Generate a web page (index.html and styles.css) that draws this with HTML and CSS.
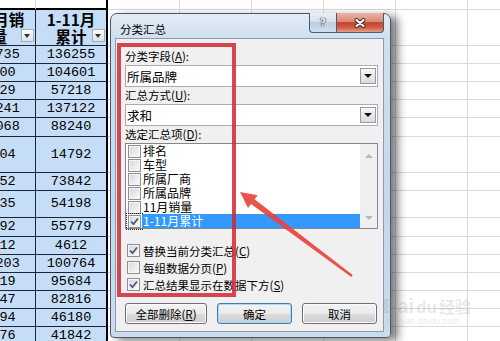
FILE: index.html
```html
<!DOCTYPE html>
<html>
	<head>
		<meta charset="UTF-8">
		<title>分类汇总</title>
		<link rel="stylesheet" href="styles.css">
	</head>
	<body>
		<div class="screen">
			<table class="sheet">
				<colgroup><col><col><col><col><col><col><col><col></colgroup>
				<tr class="r10"><td class="t"></td><td class="t e"></td><td></td><td></td><td></td><td></td><td></td><td></td></tr>
				<tr class="r36"><td class="b hd">11月销<br>量<span class="filter"></span></td><td class="b e hd">1-11月<br>累计<span class="filter"></span></td><td></td><td></td><td></td><td></td><td></td><td></td></tr>
				<tr class="r18"><td class="b">12735</td><td class="b e">136255</td><td></td><td></td><td></td><td></td><td></td><td></td></tr>
				<tr class="r18"><td class="b">9800</td><td class="b e">104601</td><td></td><td></td><td></td><td></td><td></td><td></td></tr>
				<tr class="r18"><td class="b">5129</td><td class="b e">57218</td><td></td><td></td><td></td><td></td><td></td><td></td></tr>
				<tr class="r18"><td class="b">13241</td><td class="b e">137122</td><td></td><td></td><td></td><td></td><td></td><td></td></tr>
				<tr class="r19"><td class="b">10068</td><td class="b e">88240</td><td></td><td></td><td></td><td></td><td></td><td></td></tr>
				<tr class="r36"><td class="b">1504</td><td class="b e">14792</td><td></td><td></td><td></td><td></td><td></td><td></td></tr>
				<tr class="r18"><td class="b">8052</td><td class="b e">73842</td><td></td><td></td><td></td><td></td><td></td><td></td></tr>
				<tr class="r27"><td class="b">6035</td><td class="b e">54198</td><td></td><td></td><td></td><td></td><td></td><td></td></tr>
				<tr class="r19"><td class="b">5592</td><td class="b e">55779</td><td></td><td></td><td></td><td></td><td></td><td></td></tr>
				<tr class="r18"><td class="b">1012</td><td class="b e">4612</td><td></td><td></td><td></td><td></td><td></td><td></td></tr>
				<tr class="r18"><td class="b">10203</td><td class="b e">100764</td><td></td><td></td><td></td><td></td><td></td><td></td></tr>
				<tr class="r18"><td class="b">9619</td><td class="b e">95684</td><td></td><td></td><td></td><td></td><td></td><td></td></tr>
				<tr class="r18"><td class="b">8347</td><td class="b e">82816</td><td></td><td></td><td></td><td></td><td></td><td></td></tr>
				<tr class="r18"><td class="b">4694</td><td class="b e">46180</td><td></td><td></td><td></td><td></td><td></td><td></td></tr>
				<tr class="r18"><td class="b">4176</td><td class="b e">41842</td><td></td><td></td><td></td><td></td><td></td><td></td></tr>
			</table>

			<div class="dialog">
				<div class="titlebar">
					<span class="title">分类汇总</span>
					<div class="caption">
						<span class="cap help">?</span>
						<span class="cap close">
							<svg width="14" height="10" viewBox="0 0 14 10">
								<path d="M3.5 2l7 6M10.5 2l-7 6" stroke="#3a2522" stroke-width="4" stroke-linecap="round"/>
								<path d="M3.5 2l7 6M10.5 2l-7 6" stroke="#fff" stroke-width="2.2" stroke-linecap="round"/>
							</svg>
						</span>
					</div>
				</div>
				<div class="panel">
					<div class="label">分类字段(<u>A</u>):</div>
					<div class="combo"><span>所属品牌</span><i class="drop"></i></div>
					<div class="label">汇总方式(<u>U</u>):</div>
					<div class="combo"><span>求和</span><i class="drop"></i></div>
					<div class="label">选定汇总项(<u>D</u>):</div>
					<div class="listbox">
						<ul class="items">
							<li><span class="cb"></span><span class="txt">排名</span></li>
							<li><span class="cb"></span><span class="txt">车型</span></li>
							<li><span class="cb"></span><span class="txt">所属厂商</span></li>
							<li><span class="cb"></span><span class="txt">所属品牌</span></li>
							<li><span class="cb"></span><span class="txt">11月销量</span></li>
							<li class="sel"><span class="cb focus"><svg width="11" height="11" viewBox="0 0 11 11"><path d="M2 5.5l2.5 2.6L9 2.5" fill="none" stroke="#4a5c7e" stroke-width="1.8"/></svg></span><span class="txt">1-11月累计</span></li>
						</ul>
						<div class="vscroll"><i class="up"></i><i class="down"></i></div>
					</div>
					<div class="opts">
						<div class="opt"><span class="cb"><svg width="11" height="11" viewBox="0 0 11 11"><path d="M2 5.5l2.5 2.6L9 2.5" fill="none" stroke="#4a5c7e" stroke-width="1.8"/></svg></span>替换当前分类汇总(<u>C</u>)</div>
						<div class="opt"><span class="cb"></span>每组数据分页(<u>P</u>)</div>
						<div class="opt"><span class="cb"><svg width="11" height="11" viewBox="0 0 11 11"><path d="M2 5.5l2.5 2.6L9 2.5" fill="none" stroke="#4a5c7e" stroke-width="1.8"/></svg></span>汇总结果显示在数据下方(<u>S</u>)</div>
					</div>
					<div class="btns">
						<button class="btn wide">全部删除(<u>R</u>)</button>
						<button class="btn def">确定</button>
						<button class="btn">取消</button>
					</div>
				</div>
			</div>

			<div class="redbox"></div>

			<svg class="arrow" width="500" height="341" viewBox="0 0 500 341">
				<polygon points="240,192 257.6,195.2 254.6,199.2 352.7,275 351.3,277 251,204 248,208" fill="#e8463c"/>
			</svg>

			<div class="mark">
				<span class="bai">Bai</span><span class="du">du</span><span class="jy">经验</span>
				<div class="url">jingyan.baidu.com</div>
			</div>
		</div>
	</body>
</html>
```

FILE: styles.css
```css
html{
	margin: 0;
	padding: 0;
}
body{
	margin: 0;
	padding: 0;
	width: 500px;
	height: 341px;
	overflow: hidden;
	background: #fff;
	font-family: "Noto Sans CJK SC", sans-serif;
}
.screen{
	position: relative;
	width: 500px;
	height: 341px;
	overflow: hidden;
}

/* spreadsheet */
.sheet{
	border-collapse: separate;
	border-spacing: 0;
	table-layout: fixed;
	width: 576px;
	margin-left: -36px;
	font-family: "Liberation Mono", monospace;
	font-size: 13.5px;
	color: #000;
}
.sheet col{
	width: 72px;
}
.sheet td{
	padding: 0;
	border-right: 1px solid #d9d9d9;
	border-bottom: 1px solid #d9d9d9;
	text-align: center;
	line-height: 14px;
	position: relative;
}
.sheet td.b{
	background: #c5ddf7;
	border-right-color: #1d2638;
	border-bottom-color: #1d2638;
}
.sheet td.e{
	border-right: 2px solid #000;
}
.sheet td.t{
	border-bottom: 2px solid #000;
}
.sheet td.hd{
	font-family: "Noto Sans CJK SC", sans-serif;
	font-weight: bold;
	font-size: 15.5px;
	line-height: 17px;
}
.r10{ height: 10px; }
.r18{ height: 18px; }
.r19{ height: 19px; }
.r27{ height: 27px; }
.r36{ height: 36px; }

.filter{
	position: absolute;
	right: 1px;
	bottom: 3px;
	width: 13px;
	height: 13px;
	box-sizing: border-box;
	border: 1px solid #a3adba;
	background: linear-gradient(#fff, #dce2e9);
}
.filter::after{
	content: "";
	position: absolute;
	left: 2px;
	top: 4px;
	border-left: 3.5px solid transparent;
	border-right: 3.5px solid transparent;
	border-top: 4px solid #333;
}

/* dialog */
.dialog{
	position: absolute;
	left: 110px;
	top: 13px;
	width: 281px;
	height: 325px;
	box-sizing: border-box;
	border: 1px solid #4d5969;
	border-radius: 7px 7px 4px 4px;
	background: linear-gradient(#e3ecf6, #d0e0f0 24px, #c4d7ec 60%, #cadcee);
	padding: 0 6px 5px 4px;
	display: flex;
	flex-direction: column;
	box-shadow: 7px 3px 9px rgba(0,0,0,.5);
	font-size: 11.5px;
	color: #000;
}
.titlebar{
	height: 24px;
	flex: none;
	display: flex;
	align-items: center;
	padding: 6px 0 0 5px;
	box-sizing: border-box;
	position: relative;
}
.caption{
	position: absolute;
	top: -1px;
	right: 0;
	display: flex;
}
.cap{
	height: 20px;
	box-sizing: border-box;
	border: 1px solid #4f5a6a;
	border-top: none;
	display: flex;
	align-items: center;
	justify-content: center;
}
.help{
	width: 27px;
	border-right: none;
	border-radius: 0 0 0 4px;
	background: linear-gradient(#eaf1f8, #d4e0ed 45%, #bccde1 50%, #d0dfee);
	font-family: "DejaVu Sans", sans-serif;
	font-weight: bold;
	font-size: 11px;
	color: #eef3f8;
	text-shadow: 0 0 1px #233247, 0 0 1px #233247, 0 0 1px #233247;
}
.close{
	width: 48px;
	border-radius: 0 0 4px 0;
	background: linear-gradient(#ebb3a6, #dc8b79 45%, #c7452e 50%, #cf5a42 75%, #e5a184);
}

.panel{
	flex: 1;
	background: #f0f0f0;
	border: 1px solid #8a9ab0;
	padding: 9px 5px 0 9px;
	display: flex;
	flex-direction: column;
}
.label{
	height: 16px;
	line-height: 16px;
}
.combo{
	height: 22px;
	box-sizing: border-box;
	margin-top: 1px;
	border: 1px solid #abadb3;
	background: #fff;
	display: flex;
	align-items: center;
	padding: 0 1px;
	font-size: 12.5px;
}
.combo .drop{
	margin-left: auto;
	width: 16px;
	height: 16px;
	box-sizing: border-box;
	border: 1px solid #9a9a9a;
	background: linear-gradient(#f7f7f7, #dcdcdc);
	position: relative;
}
.combo .drop::after{
	content: "";
	position: absolute;
	left: 3px;
	top: 5px;
	border-left: 4px solid transparent;
	border-right: 4px solid transparent;
	border-top: 4px solid #111;
}

.listbox{
	margin-top: 1px;
	height: 86px;
	box-sizing: border-box;
	border: 1px solid #828790;
	background: #fff;
	display: flex;
}
.items{
	list-style: none;
	margin: 0;
	padding: 0;
	flex: 1;
	font-size: 12px;
}
.items li{
	height: 14px;
	display: flex;
	align-items: center;
}
.items .cb{
	margin: 0 1px 0 2px;
}
.items .txt{
	flex: 1;
	height: 14px;
	line-height: 14px;
	padding-left: 1px;
}
.items .sel .txt{
	background: #3399ff;
	color: #fff;
}
.vscroll{
	width: 17px;
	background: #efefef;
	display: flex;
	flex-direction: column;
	justify-content: space-between;
	align-items: center;
	padding: 10px 0 8px;
	box-sizing: border-box;
}
.vscroll i{
	border-left: 4px solid transparent;
	border-right: 4px solid transparent;
}
.vscroll .up{
	border-bottom: 4px solid #b9b9b9;
}
.vscroll .down{
	border-top: 4px solid #b9b9b9;
}

.cb{
	width: 13px;
	height: 13px;
	flex: none;
	box-sizing: border-box;
	border: 1px solid #8e8f8f;
	background: linear-gradient(135deg, #d4d6da, #fbfbfb);
	box-shadow: inset 0 0 0 1px #f6f6f6;
	display: flex;
	align-items: center;
	justify-content: center;
}
.cb.focus{
	outline: 1px dotted #222;
	outline-offset: 1px;
}

.opts{
	margin-top: 13px;
}
.opt{
	height: 17px;
	display: flex;
	align-items: center;
}
.opt .cb{
	margin: 0 3px 0 2px;
}

.btns{
	margin-top: 10px;
	display: flex;
	gap: 10px;
}
.btn{
	width: 75px;
	height: 21px;
	padding: 0;
	font: inherit;
	color: #000;
	border: 1px solid #707070;
	border-radius: 3px;
	background: linear-gradient(#f3f3f3, #ebebeb 50%, #dddddd 51%, #cfcfcf);
	box-shadow: inset 0 0 0 1px #fbfbfb;
}
.btn.wide{
	width: 82px;
}
.btn.def{
	border-color: #3c7fb1;
	box-shadow: inset 0 0 0 1px #a7dcf5;
}

/* annotations */
.redbox{
	position: absolute;
	left: 117px;
	top: 43px;
	width: 119px;
	height: 254px;
	box-sizing: border-box;
	border: 4px solid rgba(208,40,52,.85);
}
.arrow{
	position: absolute;
	left: 0;
	top: 0;
	opacity: .92;
}
.mark{
	position: absolute;
	left: 383px;
	top: 294px;
	color: rgba(150,150,150,.22);
	font-family: "Liberation Sans", sans-serif;
	font-weight: bold;
	white-space: nowrap;
}
.mark .bai{
	font-size: 20px;
}
.mark .du{
	font-size: 17px;
	margin-left: 2px;
}
.mark .jy{
	font-family: "Noto Sans CJK SC", sans-serif;
	font-size: 16px;
	margin-left: 2px;
}
.mark .url{
	font-size: 9px;
	font-weight: normal;
	margin: -2px 0 0 4px;
}
```
